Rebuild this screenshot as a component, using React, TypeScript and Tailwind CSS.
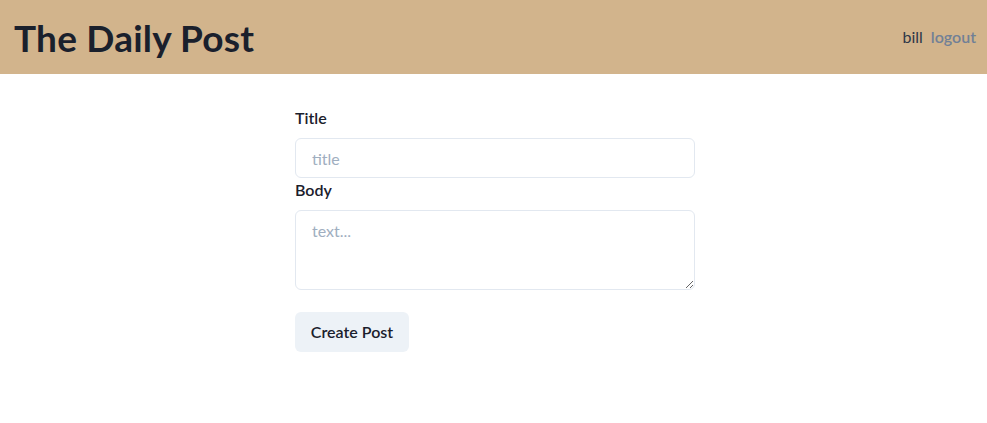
export default function App() {
  return (
    <div className="min-h-screen bg-white text-[#1A202C] font-['Lato','Liberation_Sans',sans-serif]">
      <header className="h-[74px] bg-[#D2B48C] flex items-center justify-between pl-[14px] pr-[11px]">
        <h1 className="text-[37px] font-bold leading-none tracking-[0.2px] text-[#1A202C]">The Daily Post</h1>
        <div className="flex items-center gap-2 text-[16px]">
          <span className="text-[#2D3748]">bill</span>
          <a href="#" className="font-semibold text-[#718096]">logout</a>
        </div>
      </header>

      <main className="w-[400px] mx-auto pt-8 pl-[3px] box-content">
        <form className="flex flex-col" onSubmit={(e) => e.preventDefault()}>
          <label className="text-[16px] font-semibold leading-6 mb-2">Title</label>
          <input
            type="text"
            placeholder="title"
            className="h-10 w-full rounded-md border border-[#E2E8F0] px-4 text-[16px] outline-none placeholder:text-[#A0AEC0]"
          />
          <label className="text-[16px] font-semibold leading-6 mb-2">Body</label>
          <textarea
            placeholder="text..."
            className="h-20 w-full rounded-md border border-[#E2E8F0] px-4 py-2 text-[16px] outline-none placeholder:text-[#A0AEC0] block"
          />
          <div className="mt-[22px]">
            <button
              type="submit"
              className="h-10 w-[114px] rounded-md bg-[#EDF2F7] text-[16px] font-semibold text-[#1A202C]"
            >
              Create Post
            </button>
          </div>
        </form>
      </main>
    </div>
  );
}
